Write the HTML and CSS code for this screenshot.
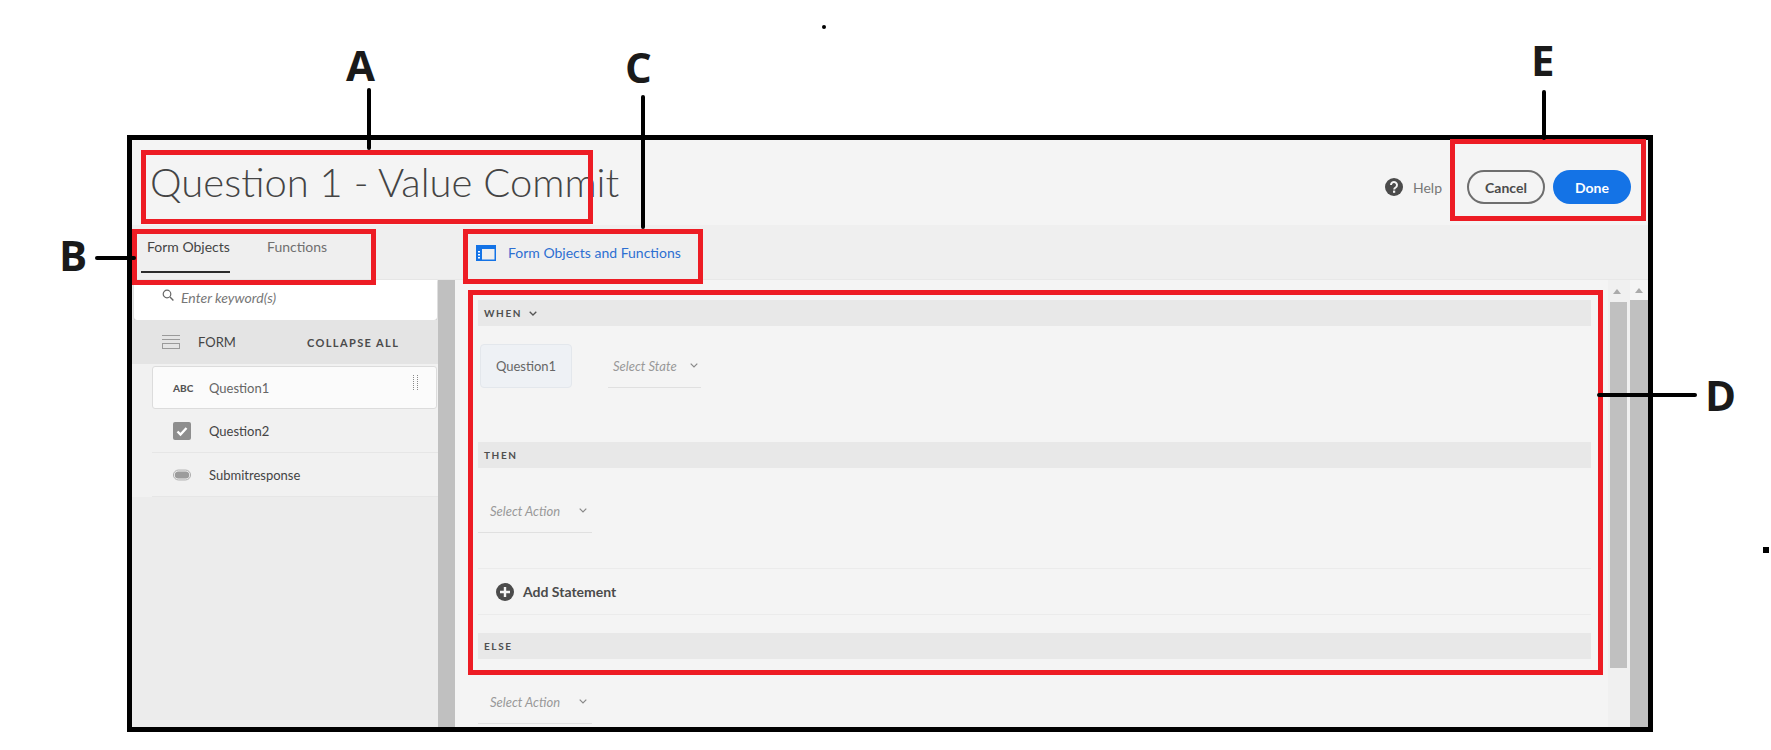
FILE: index.html
```html
<!DOCTYPE html>
<html lang="en">
<head>
    <meta charset="UTF-8">
    <title>Rule Editor</title>
    <link rel="stylesheet" href="styles.css">
</head>
<body>
    <div class="frame">
        <header class="top">
            <h1 class="title">Question 1 - Value Commit</h1>
            <div class="top-actions">
                <svg class="help-icon" viewBox="0 0 18 18"><circle cx="9" cy="9" r="9" fill="#4b4b4b"/><path d="M6 7a3 3 0 1 1 4.6 2.5c-1 .6-1.4 1-1.4 2" fill="none" stroke="#f4f4f4" stroke-width="2"/><rect x="8" y="12.6" width="2.2" height="2.2" fill="#f4f4f4"/></svg>
                <span class="help-text">Help</span>
                <button type="button" class="btn btn-cancel">Cancel</button>
                <button type="button" class="btn btn-done">Done</button>
            </div>
        </header>

        <div class="toolbar">
            <div class="tabs">
                <div class="tab tab-active">Form Objects</div>
                <div class="tab">Functions</div>
            </div>
            <div class="toggle">
                <svg class="toggle-icon" viewBox="0 0 20 16"><rect x="0.75" y="0.75" width="18.5" height="14.5" fill="none" stroke="#1473e6" stroke-width="1.5"/><rect x="0" y="0" width="20" height="4" fill="#1473e6"/><rect x="0" y="0" width="6" height="16" fill="#1473e6"/><rect x="2" y="6" width="2" height="1.5" fill="#fff"/><rect x="2" y="9" width="2" height="1.5" fill="#fff"/><rect x="2" y="12" width="2" height="1.5" fill="#fff"/></svg>
                <span>Form Objects and Functions</span>
            </div>
        </div>

        <div class="workspace">
            <aside class="side">
                <div class="search">
                    <svg class="search-icon" viewBox="0 0 12 12"><circle cx="5" cy="5" r="3.8" fill="none" stroke="#666" stroke-width="1.2"/><path d="M8 8l3.4 3.4" stroke="#666" stroke-width="1.4"/></svg>
                    <span>Enter keyword(s)</span>
                </div>
                <div class="form-head">
                    <svg class="form-icon" viewBox="0 0 18 14"><path d="M0 .5h18M0 4.5h18" stroke="#9a9a9a"/><rect x="0.5" y="8.5" width="17" height="5" fill="none" stroke="#9a9a9a"/></svg>
                    <span class="form-label">FORM</span>
                    <span class="collapse">COLLAPSE ALL</span>
                </div>
                <ul class="tree">
                    <li class="tree-row tree-row-selected">
                        <span class="abc">ABC</span>
                        <span>Question1</span>
                        <svg class="drag" viewBox="0 0 5 16"><path d="M.5 0v16M4.5 0v16" stroke="#8a8a8a" stroke-dasharray="1 1"/></svg>
                    </li>
                    <li class="tree-row">
                        <svg class="row-icon" viewBox="0 0 18 18"><rect width="18" height="18" rx="2" fill="#8e8e8e"/><path d="M4.5 9.5l3 3 6-6.5" fill="none" stroke="#fff" stroke-width="2.4"/></svg>
                        <span>Question2</span>
                    </li>
                    <li class="tree-row">
                        <svg class="row-icon" viewBox="0 0 20 12"><rect x="0.5" y="0.5" width="19" height="11" rx="5.5" fill="#f0f0f0" stroke="#a8a8a8"/><rect x="2" y="2" width="16" height="8" rx="4" fill="#9c9c9c"/></svg>
                        <span>Submitresponse</span>
                    </li>
                </ul>
            </aside>

            <div class="side-bar"></div>

            <main class="rule">
                <div class="rule-body">
                    <div class="rule-head">WHEN <svg class="chev chev-dark" viewBox="0 0 8 5"><path d="M.7.7L4 4l3.3-3.3" fill="none" stroke="#555" stroke-width="1.3"/></svg></div>
                    <div class="when-row">
                        <div class="chip">Question1</div>
                        <div class="picker picker-state">Select State <svg class="chev" viewBox="0 0 8 5"><path d="M.7.7L4 4l3.3-3.3" fill="none" stroke="#888" stroke-width="1.2"/></svg></div>
                    </div>
                    <div class="rule-head">THEN</div>
                    <div class="action-row">
                        <div class="picker picker-action">Select Action <svg class="chev" viewBox="0 0 8 5"><path d="M.7.7L4 4l3.3-3.3" fill="none" stroke="#888" stroke-width="1.2"/></svg></div>
                    </div>
                    <div class="add-row">
                        <svg class="add-icon" viewBox="0 0 18 18"><circle cx="9" cy="9" r="9" fill="#4b4b4b"/><path d="M9 4v10M4 9h10" stroke="#f4f4f4" stroke-width="2.4"/></svg>
                        <span>Add Statement</span>
                    </div>
                    <div class="rule-head rule-head-else">ELSE</div>
                    <div class="else-row">
                        <div class="picker picker-action">Select Action <svg class="chev" viewBox="0 0 8 5"><path d="M.7.7L4 4l3.3-3.3" fill="none" stroke="#888" stroke-width="1.2"/></svg></div>
                    </div>
                </div>
                <div class="scroll scroll-inner"><i class="arrow"></i><div class="thumb thumb-inner"></div></div>
                <div class="scroll scroll-outer"><i class="arrow"></i><div class="thumb thumb-outer"></div></div>
            </main>
        </div>
    </div>

    <!-- annotations drawn on top of the screenshot -->
    <div class="mark box-a"></div>
    <div class="mark box-b"></div>
    <div class="mark box-c"></div>
    <div class="mark box-d"></div>
    <div class="mark box-e"></div>

    <div class="line line-a"></div>
    <div class="line line-b"></div>
    <div class="line line-c"></div>
    <div class="line line-d"></div>
    <div class="line line-e"></div>

    <div class="letter letter-a">A</div>
    <div class="letter letter-b">B</div>
    <div class="letter letter-c">C</div>
    <div class="letter letter-d">D</div>
    <div class="letter letter-e">E</div>

    <div class="line dot-top"></div>
    <div class="line dot-right"></div>
</body>
</html>
```

FILE: styles.css
```css
* {
    box-sizing: border-box;
}

body {
    margin: 0;
    height: 750px;
    overflow: hidden;
    position: relative;
    background-color: #fff;
    font-family: "Lato", "Liberation Sans", sans-serif;
    font-size: 14px;
    color: #4b4b4b;
}

.frame {
    margin: 135px 0 0 127px;
    width: 1526px;
    height: 597px;
    border: 5px solid #000;
    background-color: #f4f4f4;
    display: flex;
    flex-direction: column;
    overflow: hidden;
}

/* header */
.top {
    height: 85px;
    flex: none;
    display: flex;
    align-items: center;
    justify-content: space-between;
    padding: 0 17px 0 18px;
}

.title {
    margin: 0 0 2px;
    font-size: 40px;
    font-weight: 300;
    color: #444;
}

.top-actions {
    display: flex;
    align-items: center;
    margin-top: 9px;
}

.help-icon {
    width: 18px;
    height: 18px;
}

.help-text {
    margin: 0 25px 0 10px;
    color: #777;
}

.btn {
    width: 78px;
    height: 34px;
    border-radius: 17px;
    font-family: inherit;
    font-size: 14px;
    font-weight: 700;
    padding: 0;
}

.btn-cancel {
    background-color: #f4f4f4;
    border: 2px solid #6e6e6e;
    color: #4b4b4b;
    margin-right: 8px;
}

.btn-done {
    background-color: #1473e6;
    border: 0;
    color: #fff;
}

/* tabs row */
.toolbar {
    height: 55px;
    flex: none;
    display: flex;
    background-color: #efefef;
    border-bottom: 1px solid #e8e8e8;
}

.tabs {
    width: 344px;
    display: flex;
    padding-left: 9px;
    gap: 31px;
}

.tab {
    height: 48px;
    padding: 13px 0 0 6px;
    color: #707070;
}

.tab-active {
    width: 89px;
    color: #444;
    border-bottom: 2px solid #2c2c2c;
}

.toggle {
    display: flex;
    align-items: center;
    gap: 12px;
    height: 55px;
    color: #2d6fd2;
    padding-bottom: 0;
}

.toggle-icon {
    width: 20px;
    height: 16px;
}

/* body */
.workspace {
    flex: 1;
    display: flex;
    min-height: 0;
}

.side {
    width: 306px;
    flex: none;
    background-color: #ececec;
}

.search {
    height: 40px;
    margin: 0 1px 0 2px;
    background-color: #fff;
    border-radius: 0 0 3px 3px;
    box-shadow: 0 1px 2px #bbb;
    display: flex;
    align-items: flex-start;
    padding: 9px 0 0 28px;
    font-style: italic;
    color: #777;
}

.search-icon {
    width: 12px;
    height: 12px;
    margin: 0 7px 0 0;
}

.form-head {
    height: 44px;
    background-color: #e4e4e4;
    display: flex;
    align-items: center;
    padding: 0 0 0 30px;
}

.form-icon {
    width: 18px;
    height: 14px;
}

.form-label {
    margin-left: 18px;
    font-size: 13px;
    color: #444;
}

.collapse {
    margin-left: 71px;
    font-size: 11px;
    font-weight: 700;
    letter-spacing: 1.4px;
    color: #4b4b4b;
}

.tree {
    list-style: none;
    margin: 0;
    padding: 2px 0 0 20px;
    background-color: #f1f1f1;
    height: 133px;
}

.tree-row {
    height: 44px;
    display: flex;
    align-items: center;
    color: #444;
    border-bottom: 1px solid #e6e6e6;
    font-size: 13px;
    position: relative;
}

.tree-row-selected {
    height: 43px;
    margin-right: 1px;
    background-color: #fbfbfb;
    border: 1px solid #dcdcdc;
    border-radius: 3px;
    color: #666;
}

.abc {
    width: 56px;
    padding-left: 20px;
    font-size: 10px;
    font-weight: 900;
    color: #555;
    flex: none;
}

.row-icon {
    width: 18px;
    height: 18px;
    margin: 0 18px 0 21px;
}

.drag {
    position: absolute;
    right: 18px;
    top: 8px;
    width: 5px;
    height: 16px;
}

.side-bar {
    width: 17px;
    flex: none;
    background-color: #c0c0c0;
}

/* rule editor */
.rule {
    flex: 1;
    display: flex;
    min-width: 0;
    overflow: hidden;
}

.rule-body {
    flex: 1;
    padding: 20px 17px 0 23px;
}

.rule-head {
    height: 26px;
    background-color: #e8e8e8;
    display: flex;
    align-items: center;
    padding-left: 6px;
    font-size: 10px;
    font-weight: 700;
    letter-spacing: 1.6px;
    color: #4f4f4f;
}

.chev {
    width: 8px;
    height: 5px;
}

.chev-dark {
    margin-left: 7px;
}

.when-row {
    height: 116px;
    padding: 18px 0 0 2px;
    display: flex;
    align-items: flex-start;
}

.chip {
    width: 92px;
    height: 44px;
    background-color: #eef1f5;
    border: 1px solid #e3e7ec;
    border-radius: 4px;
    display: flex;
    align-items: center;
    justify-content: center;
    color: #666;
    font-size: 13px;
}

.picker {
    height: 44px;
    display: flex;
    align-items: center;
    font-size: 13px;
    font-style: italic;
    color: #999;
    border-bottom: 1px solid #e0e0e0;
    white-space: pre;
}

.picker-state {
    width: 93px;
    margin-left: 36px;
    padding-left: 5px;
}

.picker-state .chev {
    margin-left: 10px;
}

.picker-action {
    width: 114px;
    padding-left: 12px;
}

.picker-action .chev {
    margin-left: 16px;
}

.action-row {
    height: 100px;
    padding-top: 21px;
}

.add-row {
    height: 47px;
    display: flex;
    align-items: center;
    border-top: 1px solid #ebebeb;
    border-bottom: 1px solid #ebebeb;
    padding-left: 18px;
    font-weight: 700;
    color: #4b4b4b;
}

.add-icon {
    width: 18px;
    height: 18px;
    margin-right: 9px;
}

.rule-head-else {
    margin-top: 18px;
}

.else-row {
    padding-top: 21px;
}

/* the two scrollbars */
.scroll {
    flex: none;
    position: relative;
    padding-top: 22px;
}

.scroll-inner {
    width: 22px;
    background-color: #f0f0f0;
    padding-left: 2px;
}

.scroll-outer {
    width: 18px;
    padding-top: 20px;
}

.arrow {
    position: absolute;
    top: 9px;
    left: 5px;
    border: 4px solid transparent;
    border-top: 0;
    border-bottom: 5px solid #aaa;
}

.scroll-outer .arrow {
    top: 8px;
}

.thumb {
    background-color: #c0c0c0;
}

.thumb-inner {
    width: 17px;
    height: 366px;
}

.thumb-outer {
    height: 427px;
}

/* annotations */
.mark {
    position: absolute;
    border: 5px solid #ed1c24;
}

.box-a { left: 141px; top: 150px; width: 452px; height: 74px; }
.box-b { left: 132px; top: 229px; width: 244px; height: 56px; }
.box-c { left: 463px; top: 229px; width: 240px; height: 55px; }
.box-d { left: 468px; top: 290px; width: 135px; height: 385px; width: 1135px; }
.box-e { left: 1450px; top: 139px; width: 196px; height: 82px; }

.line {
    position: absolute;
    background-color: #000;
    border-radius: 2px;
}

.line-a { left: 367px; top: 88px; width: 4px; height: 62px; }
.line-b { left: 95px; top: 256px; width: 41px; height: 4px; }
.line-c { left: 641px; top: 95px; width: 4px; height: 134px; }
.line-d { left: 1597px; top: 393px; width: 100px; height: 4px; }
.line-e { left: 1542px; top: 90px; width: 4px; height: 50px; }

.letter {
    position: absolute;
    font-family: "Open Sans", "Liberation Sans", sans-serif;
    font-size: 42px;
    font-weight: 700;
    line-height: 42px;
    color: #1a1a1a;
}

.letter-a { left: 346px; top: 44px; }
.letter-b { left: 59px; top: 234px; }
.letter-c { left: 625px; top: 46px; }
.letter-d { left: 1705px; top: 374px; }
.letter-e { left: 1531px; top: 39px; }

.dot-top { left: 822px; top: 25px; width: 4px; height: 4px; }
.dot-right { left: 1763px; top: 547px; width: 6px; height: 6px; border-radius: 0; }
```
